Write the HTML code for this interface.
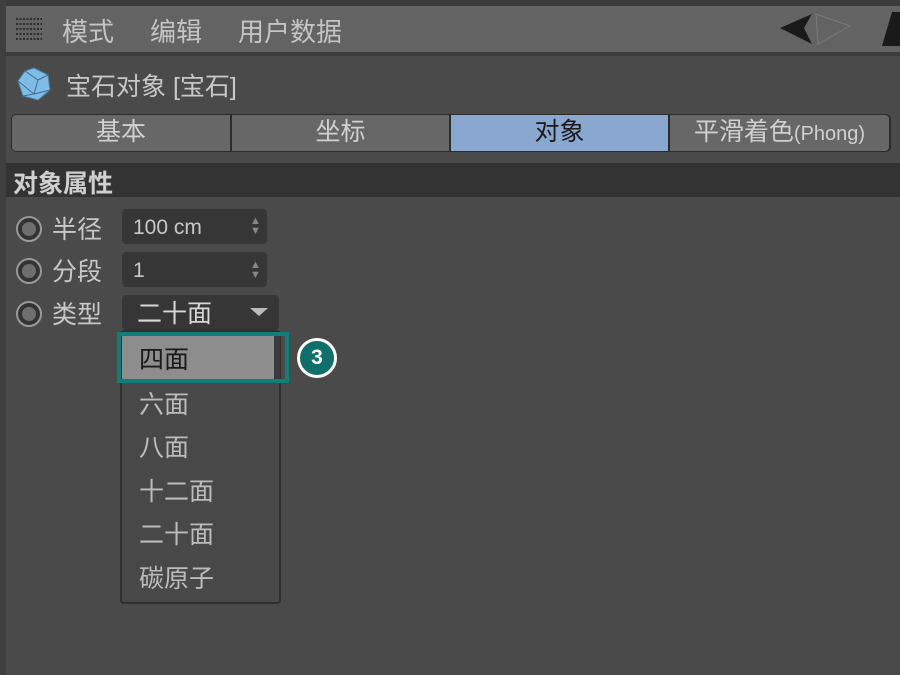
<!DOCTYPE html>
<html><head><meta charset="utf-8"><style>
*{margin:0;padding:0;box-sizing:border-box}
body{width:900px;height:675px;background:#4a4a4a;font-family:"Liberation Sans","Noto Sans CJK SC",sans-serif;color:#c8c8c8;position:relative;overflow:hidden}
.abs{position:absolute}
.t{white-space:nowrap}
</style></head><body>
<div class="abs" style="left:0;top:0;width:900px;height:6px;background:#3a3a3a"></div>
<div class="abs" style="left:0;top:0;width:6px;height:675px;background:#3f3f3f"></div>
<div class="abs" style="left:6px;top:6px;width:894px;height:46px;background:#636363"></div>
<div class="abs" style="left:6px;top:52px;width:894px;height:4px;background:#3c3c3c"></div>
<svg class="abs" style="left:16px;top:17px" width="28" height="26"><g stroke="#2d2d2d" stroke-width="2" stroke-dasharray="2 1.5">
<line x1="0" y1="2" x2="26" y2="2"/><line x1="0" y1="7" x2="26" y2="7"/><line x1="0" y1="12" x2="26" y2="12"/><line x1="0" y1="17" x2="26" y2="17"/><line x1="0" y1="22" x2="26" y2="22"/></g></svg>
<div class="abs t" style="left:62px;top:12px;font-size:26px;color:#c4c4c4">模式</div>
<div class="abs t" style="left:150px;top:12px;font-size:26px;color:#c4c4c4">编辑</div>
<div class="abs t" style="left:238px;top:12px;font-size:26px;color:#c4c4c4">用户数据</div>
<svg class="abs" style="left:778px;top:10px" width="122" height="40">
<polygon points="2,18 34,4 26,18 34,34" fill="#1a1a1a"/>
<polygon points="38,4 72,16 40,34" fill="none" stroke="#7a7a7a" stroke-width="1"/>
<polygon points="114,2 122,2 122,36 104,36" fill="#1a1a1a"/>
</svg>
<svg class="abs" style="left:16px;top:66px" width="36" height="36"><polygon points="18,2 32,9 34,24 22,34 7,30 2,15 9,5" fill="#7fbde6" stroke="#4a7fa5"/><path d="M9,5 L22,14 L32,9 M22,14 L18,28 L7,30 M18,28 L34,24 M2,15 L18,28" stroke="#3d6d90" fill="none"/></svg>
<div class="abs t" style="left:66px;top:67px;font-size:25px;color:#c8c8c8">宝石对象 [宝石]</div>
<div class="abs" style="left:11px;top:114px;width:880px;height:38px;background:#2c2c2c;border-radius:5px"></div>
<div class="abs t" style="left:12px;top:115px;width:218px;height:36px;background:#676767;border-radius:4px 0 0 4px;text-align:center;font-size:25px;line-height:34px;color:#d0d0d0">基本</div>
<div class="abs t" style="left:232px;top:115px;width:217px;height:36px;background:#676767;text-align:center;font-size:25px;line-height:34px;color:#d0d0d0">坐标</div>
<div class="abs t" style="left:451px;top:115px;width:217px;height:36px;background:#8aa7cf;text-align:center;font-size:25px;line-height:34px;color:#1a1a1a">对象</div>
<div class="abs t" style="left:670px;top:115px;width:219px;height:36px;background:#676767;border-radius:0 4px 4px 0;text-align:center;font-size:25px;line-height:34px;color:#d0d0d0">平滑着色<span style="font-size:20px">(Phong)</span></div>
<div class="abs" style="left:6px;top:163px;width:894px;height:34px;background:#333333"></div>
<div class="abs t" style="left:13px;top:164px;font-size:25px;font-weight:bold;color:#d0d0d0">对象属性</div>

<div class="abs" style="left:16px;top:216px;width:26px;height:26px;border-radius:50%;background:#333;border:2px solid #999"><div style="margin:4px;width:14px;height:14px;border-radius:50%;background:#6e6e6e"></div></div>
<div class="abs t" style="left:52px;top:210px;font-size:25px">半径</div>
<div class="abs" style="left:122px;top:209px;width:145px;height:35px;background:#363636;border-radius:4px"></div>
<div class="abs t" style="left:133px;top:216px;font-size:21px">100 cm</div>
<div class="abs t" style="left:250px;top:216px;font-size:11px;line-height:10px;color:#888">▲<br>▼</div>

<div class="abs" style="left:16px;top:258px;width:26px;height:26px;border-radius:50%;background:#333;border:2px solid #999"><div style="margin:4px;width:14px;height:14px;border-radius:50%;background:#6e6e6e"></div></div>
<div class="abs t" style="left:52px;top:252px;font-size:25px">分段</div>
<div class="abs" style="left:122px;top:252px;width:145px;height:35px;background:#363636;border-radius:4px"></div>
<div class="abs t" style="left:133px;top:259px;font-size:21px">1</div>
<div class="abs t" style="left:250px;top:260px;font-size:11px;line-height:10px;color:#888">▲<br>▼</div>

<div class="abs" style="left:16px;top:301px;width:26px;height:26px;border-radius:50%;background:#333;border:2px solid #999"><div style="margin:4px;width:14px;height:14px;border-radius:50%;background:#6e6e6e"></div></div>
<div class="abs t" style="left:52px;top:295px;font-size:25px">类型</div>
<div class="abs" style="left:122px;top:295px;width:157px;height:35px;background:#363636;border-radius:4px"></div>
<div class="abs t" style="left:137px;top:294px;font-size:25px;color:#d8d8d8">二十面</div>
<svg class="abs" style="left:250px;top:308px" width="18" height="10"><polygon points="0,0 18,0 9,8" fill="#bbb"/></svg>

<div class="abs" style="left:120px;top:330px;width:161px;height:274px;background:#484848;border:2px solid #2f2f2f;border-radius:4px"></div>
<div class="abs" style="left:122px;top:336px;width:158px;height:45px;background:#8d8d8d;border-right:6px solid #3a3a3a"></div>
<div class="abs" style="left:117px;top:332px;width:172px;height:51px;border:4px solid #0f7f7a"></div>
<div class="abs t" style="left:139px;top:340px;font-size:25px;color:#1a1a1a">四面</div>
<div class="abs t" style="left:139px;top:385px;font-size:25px;color:#bcbcbc">六面</div>
<div class="abs t" style="left:139px;top:428px;font-size:25px;color:#bcbcbc">八面</div>
<div class="abs t" style="left:139px;top:472px;font-size:25px;color:#bcbcbc">十二面</div>
<div class="abs t" style="left:139px;top:515px;font-size:25px;color:#bcbcbc">二十面</div>
<div class="abs t" style="left:139px;top:559px;font-size:25px;color:#bcbcbc">碳原子</div>
<div class="abs" style="left:297px;top:338px;width:40px;height:40px;border-radius:50%;background:#0f6f6b;border:3px solid #fff;color:#fff;font-weight:bold;font-size:21px;text-align:center;line-height:34px">3</div>
</body></html>
